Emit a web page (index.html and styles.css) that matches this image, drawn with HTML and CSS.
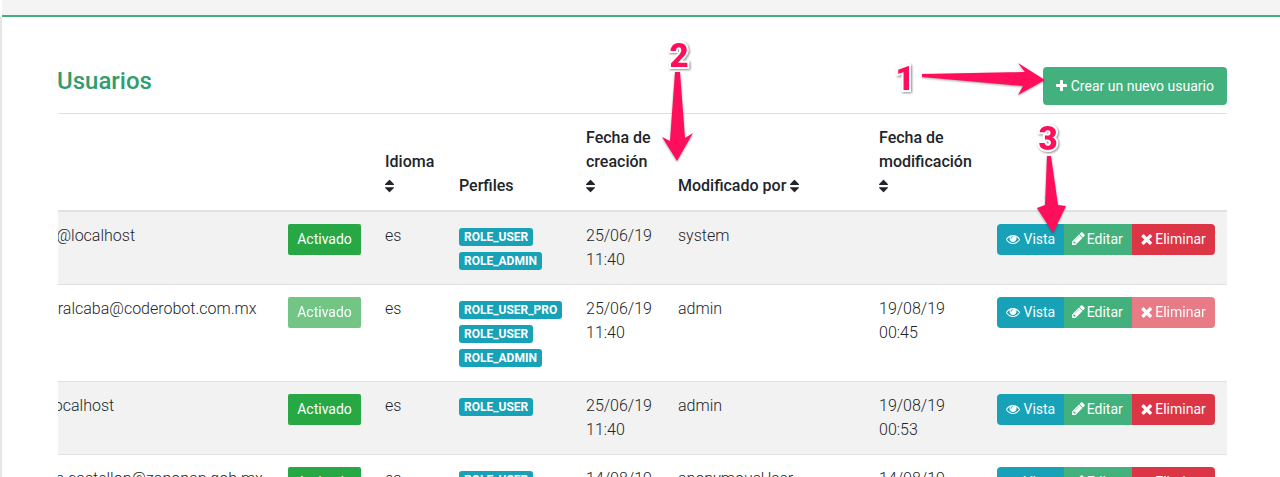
FILE: index.html
```html
<!DOCTYPE html>
<html lang="es">
<head>
  <meta charset="UTF-8">
  <title>Usuarios</title>
  <link rel="stylesheet" href="styles.css">
</head>
<body>
  <svg class="icon-defs">
    <symbol id="i-plus" viewBox="192 0 1408 1792"><path d="M1600 736v192q0 40-28 68t-68 28h-416v416q0 40-28 68t-68 28h-192q-40 0-68-28t-28-68v-416h-416q-40 0-68-28t-28-68v-192q0-40 28-68t68-28h416v-416q0-40 28-68t68-28h192q40 0 68 28t28 68v416h416q40 0 68 28t28 68z"/></symbol>
    <symbol id="i-sort" viewBox="384 0 1024 1792"><path d="M1408 1088q0 26-19 45l-448 448q-19 19-45 19t-45-19l-448-448q-19-19-19-45t19-45 45-19h896q26 0 45 19t19 45zm0-384q0 26-19 45t-45 19h-896q-26 0-45-19t-19-45 19-45l448-448q19-19 45-19t45 19l448 448q19 19 19 45z"/></symbol>
    <symbol id="i-eye" viewBox="0 0 1792 1792"><path d="M1664 960q-152-236-381-353 61 104 61 225 0 185-131.500 316.500t-316.500 131.500-316.500-131.500-131.500-316.500q0-121 61-225-229 117-381 353 133 205 333.500 326.500t434.500 121.500 434.500-121.500 333.500-326.500zm-720-384q0-20-14-34t-34-14q-125 0-214.500 89.500t-89.500 214.500q0 20 14 34t34 14 34-14 14-34q0-86 61-147t147-61q20 0 34-14t14-34zm848 384q0 34-20 69-140 230-376.500 368.500t-499.500 138.500-499.500-139-376.500-368q-20-35-20-69t20-69q140-229 376.500-368t499.500-139 499.500 139 376.500 368q20 35 20 69z"/></symbol>
    <symbol id="i-pencil" viewBox="128 0 1536 1792"><path d="M491 1536l91-91-235-235-91 91v107h128v128h107zm523-928q0-22-22-22-10 0-17 7l-542 542q-7 7-7 17 0 22 22 22 10 0 17-7l542-542q7-7 7-17zm-54-192l416 416-832 832h-416v-416zm683 96q0 53-37 90l-166 165-416-416 165-166q36-38 90-38 53 0 91 38l235 234q37 39 37 93z"/></symbol>
    <symbol id="i-times" viewBox="246 0 1245 1792"><path d="M1490 1322q0 40-28 68l-136 136q-28 28-68 28t-68-28l-294-294-294 294q-28 28-68 28t-68-28l-136-136q-28-28-28-68t28-68l294-294-294-294q-28-28-28-68t28-68l136-136q28-28 68-28t68 28l294 294 294-294q28-28 68-28t68 28l136 136q28 28 28 68t-28 68l-294 294 294 294q28 28 28 68z"/></symbol>
  </svg>

  <div class="top-bar"></div>

  <main class="content">
    <div class="page-head">
      <h2 class="page-title">Usuarios</h2>
      <button class="btn btn-create"><svg class="icon w-plus"><use href="#i-plus"/></svg> Crear un nuevo usuario</button>
    </div>

    <div class="table-wrap">
      <table class="users">
        <colgroup>
          <col class="col-login">
          <col class="col-state">
          <col class="col-lang">
          <col class="col-roles">
          <col class="col-created">
          <col class="col-modby">
          <col class="col-modified">
          <col class="col-actions">
        </colgroup>
        <thead>
          <tr>
            <th></th>
            <th></th>
            <th>Idioma <svg class="icon w-sort"><use href="#i-sort"/></svg></th>
            <th>Perfiles</th>
            <th>Fecha de creación <svg class="icon w-sort"><use href="#i-sort"/></svg></th>
            <th>Modificado por <svg class="icon w-sort"><use href="#i-sort"/></svg></th>
            <th>Fecha de modificación <svg class="icon w-sort"><use href="#i-sort"/></svg></th>
            <th></th>
          </tr>
        </thead>
        <tbody>
          <tr>
            <td>system@localhost</td>
            <td><button class="btn btn-state">Activado</button></td>
            <td>es</td>
            <td><span class="badge">ROLE_USER</span><span class="badge">ROLE_ADMIN</span></td>
            <td>25/06/19<br>11:40</td>
            <td>system</td>
            <td></td>
            <td>
              <div class="btn-group">
                <button class="btn btn-view"><svg class="icon w-eye"><use href="#i-eye"/></svg> Vista</button>
                <button class="btn btn-edit"><svg class="icon w-pencil"><use href="#i-pencil"/></svg> Editar</button>
                <button class="btn btn-delete"><svg class="icon w-times"><use href="#i-times"/></svg> Eliminar</button>
              </div>
            </td>
          </tr>
          <tr>
            <td>ricardo.ralcaba@coderobot.com.mx</td>
            <td><button class="btn btn-state is-disabled">Activado</button></td>
            <td>es</td>
            <td><span class="badge">ROLE_USER_PRO</span><span class="badge">ROLE_USER</span><span class="badge">ROLE_ADMIN</span></td>
            <td>25/06/19<br>11:40</td>
            <td>admin</td>
            <td>19/08/19<br>00:45</td>
            <td>
              <div class="btn-group">
                <button class="btn btn-view"><svg class="icon w-eye"><use href="#i-eye"/></svg> Vista</button>
                <button class="btn btn-edit"><svg class="icon w-pencil"><use href="#i-pencil"/></svg> Editar</button>
                <button class="btn btn-delete is-disabled"><svg class="icon w-times"><use href="#i-times"/></svg> Eliminar</button>
              </div>
            </td>
          </tr>
          <tr>
            <td>user@localhost</td>
            <td><button class="btn btn-state">Activado</button></td>
            <td>es</td>
            <td><span class="badge">ROLE_USER</span></td>
            <td>25/06/19<br>11:40</td>
            <td>admin</td>
            <td>19/08/19<br>00:53</td>
            <td>
              <div class="btn-group">
                <button class="btn btn-view"><svg class="icon w-eye"><use href="#i-eye"/></svg> Vista</button>
                <button class="btn btn-edit"><svg class="icon w-pencil"><use href="#i-pencil"/></svg> Editar</button>
                <button class="btn btn-delete"><svg class="icon w-times"><use href="#i-times"/></svg> Eliminar</button>
              </div>
            </td>
          </tr>
          <tr>
            <td>veronica.castellon@zapopan.gob.mx</td>
            <td><button class="btn btn-state">Activado</button></td>
            <td>es</td>
            <td><span class="badge">ROLE_USER</span></td>
            <td>14/08/19</td>
            <td>anonymousUser</td>
            <td>14/08/19</td>
            <td>
              <div class="btn-group">
                <button class="btn btn-view"><svg class="icon w-eye"><use href="#i-eye"/></svg> Vista</button>
                <button class="btn btn-edit"><svg class="icon w-pencil"><use href="#i-pencil"/></svg> Editar</button>
                <button class="btn btn-delete"><svg class="icon w-times"><use href="#i-times"/></svg> Eliminar</button>
              </div>
            </td>
          </tr>
        </tbody>
      </table>
    </div>
  </main>

  <!-- flechas y numeros de la captura -->
  <svg class="marks" width="1280" height="477" viewBox="0 0 1280 477">
    <g class="arrows">
      <polygon points="922,74 1025,72 1018,63 1045,80 1018,95 1023,86 922,77"/>
      <polygon points="675,72 680,72 685,138 693,133 677,161 662,137 670,141"/>
      <polygon points="1047,156 1051,156 1058,205 1066,206 1053,233 1037,208 1045,205"/>
    </g>
    <text class="mark-num" x="905" y="90">1</text>
    <text class="mark-num" x="679" y="67">2</text>
    <text class="mark-num" x="1048" y="150">3</text>
  </svg>
</body>
</html>
```

FILE: styles.css
```css
html, body {
  margin: 0;
  height: 100%;
  overflow: hidden;
}

body {
  position: relative;
  font-family: Roboto, "Liberation Sans", sans-serif;
  font-size: 16px;
  line-height: 24px;
  color: #212529;
  background-color: #fff;
}

.icon-defs {
  display: none;
}

.top-bar {
  height: 15px;
  background-color: #f4f4f4;
  border-bottom: 2px solid #41b07c;
  margin-left: 2px;
}

.content {
  border-left: 2px solid #e6e6e6;
  padding: 50px 53px 0 56px;
  height: 100%;
}

.page-head {
  display: flex;
  justify-content: space-between;
  align-items: flex-start;
  height: 46px;
  border-bottom: 1px solid #dee2e6;
}

.page-title {
  margin: 0 0 0 -1px;
  font-size: 24px;
  font-weight: 500;
  line-height: 29px;
  color: #2f9e6f;
}

.btn {
  display: block;
  font-family: inherit;
  font-size: 14px;
  line-height: 21px;
  color: #fff;
  padding: 4px 8px;
  border: 1px solid transparent;
  border-radius: 4px;
  white-space: nowrap;
  cursor: pointer;
}

.btn-create {
  height: 38px;
  padding: 6px 12px;
  line-height: 24px;
  background-color: #43b17d;
}

.btn-state {
  width: 73px;
  padding: 4px 0;
  background-color: #28a745;
  border-radius: 2px;
}

.is-disabled {
  opacity: 0.65;
}

.btn-group {
  display: flex;
}

.btn-group .btn {
  border-radius: 0;
}

.btn-group .btn:first-child {
  border-radius: 4px 0 0 4px;
}

.btn-group .btn:last-child {
  border-radius: 0 4px 4px 0;
}

.btn-view {
  background-color: #17a2b8;
}

.btn-edit {
  background-color: #43b17d;
}

.btn-delete {
  background-color: #dc3545;
}

.icon {
  height: 14px;
  fill: currentColor;
  vertical-align: -2px;
}

.w-plus { width: 11px; }
.w-eye { width: 14px; }

.w-pencil {
  width: 13px;
  height: 15px;
  margin: 0 -2px 0 -1px;
}

.w-times {
  width: 11px;
  height: 16px;
  vertical-align: -3px;
}

.w-sort {
  width: 9px;
  height: 16px;
  vertical-align: -3px;
}

.table-wrap {
  overflow: hidden;
}

.users {
  width: 1234px;
  margin-left: -65px;
  table-layout: fixed;
  border-collapse: collapse;
}

.col-login { width: 283px; }
.col-state { width: 97px; }
.col-lang { width: 74px; }
.col-roles { width: 127px; }
.col-created { width: 92px; }
.col-modby { width: 201px; }
.col-modified { width: 118px; }
.col-actions { width: 242px; }

.users th {
  padding: 12px;
  text-align: left;
  vertical-align: bottom;
  font-weight: 500;
  border-bottom: 2px solid #dee2e6;
}

.users td {
  padding: 12px;
  vertical-align: top;
  font-weight: 300;
  color: #212529;
  border-bottom: 1px solid #dee2e6;
}

.users tbody tr:nth-child(odd) {
  background-color: #f2f2f2;
}

.users td:first-child {
  white-space: nowrap;
}

.badge {
  display: block;
  width: fit-content;
  margin: 4px 0 6px;
  padding: 0 5px;
  font-size: 12px;
  font-weight: 700;
  line-height: 18px;
  color: #fff;
  background-color: #17a2b8;
  border-radius: 3px;
}

.badge + .badge {
  margin-top: 0;
}

.badge:last-child {
  margin-bottom: 2px;
}

.marks {
  position: absolute;
  top: 0;
  left: 0;
  pointer-events: none;
}

.arrows {
  fill: #ff0f5b;
  filter: drop-shadow(0 1px 1px rgba(0, 0, 0, 0.35));
}

.mark-num {
  font-family: Roboto, "Liberation Sans", sans-serif;
  font-size: 33px;
  font-weight: 900;
  text-anchor: middle;
  fill: #ff0f5b;
  stroke: #fff;
  stroke-width: 4px;
  paint-order: stroke;
  filter: drop-shadow(1px 1px 1px rgba(0, 0, 0, 0.45));
}
```
